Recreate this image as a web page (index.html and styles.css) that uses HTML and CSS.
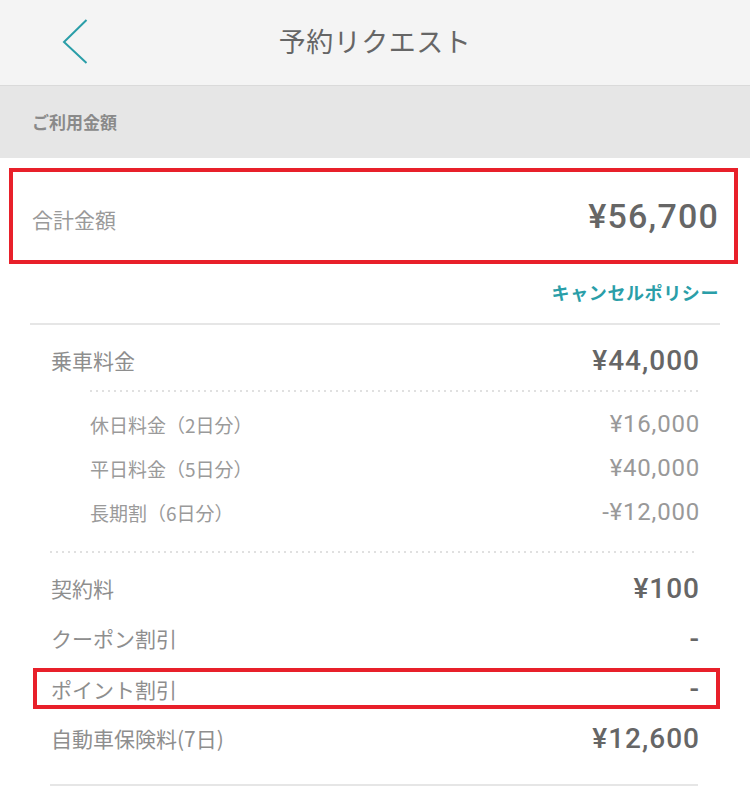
FILE: index.html
```html
<!DOCTYPE html>
<html lang="ja">
<head>
<meta charset="utf-8">
<title>予約リクエスト</title>
<link rel="stylesheet" href="styles.css">
</head>
<body>
<header class="header">
  <div class="header-left">
    <svg class="back" width="30" height="46" viewBox="0 0 30 46" aria-label="戻る">
      <polyline points="26.5,2 4,24 26.5,45" fill="none" stroke="#2a9ea8" stroke-width="2"/>
    </svg>
  </div>
  <h1 class="title">予約リクエスト</h1>
  <div class="header-right"></div>
</header>

<div class="section-head">ご利用金額</div>

<div class="total">
  <span class="total-label">合計金額</span>
  <span class="total-value">¥56,700</span>
</div>

<div class="policy"><a class="policy-link">キャンセルポリシー</a></div>

<div class="rule rule-wide"></div>

<div class="list">
  <div class="row row-first">
    <span class="label">乗車料金</span>
    <span class="value">¥44,000</span>
  </div>
  <div class="dots dots-sub"></div>
  <div class="sub">
    <div class="sub-row">
      <span class="sub-label">休日料金（2日分）</span>
      <span class="sub-value">¥16,000</span>
    </div>
    <div class="sub-row">
      <span class="sub-label">平日料金（5日分）</span>
      <span class="sub-value">¥40,000</span>
    </div>
    <div class="sub-row">
      <span class="sub-label">長期割（6日分）</span>
      <span class="sub-value">-¥12,000</span>
    </div>
  </div>
  <div class="dots"></div>
  <div class="main-rows">
    <div class="row">
      <span class="label">契約料</span>
      <span class="value">¥100</span>
    </div>
    <div class="row">
      <span class="label">クーポン割引</span>
      <span class="value">-</span>
    </div>
    <div class="row row-marked">
      <span class="label">ポイント割引</span>
      <span class="value">-</span>
    </div>
    <div class="row">
      <span class="label">自動車保険料(7日)</span>
      <span class="value">¥12,600</span>
    </div>
  </div>
  <div class="rule rule-end"></div>
</div>
</body>
</html>
```

FILE: styles.css
```css
* { box-sizing: border-box; }

body {
  margin: 0;
  width: 750px;
  background: #ffffff;
  font-family: "Noto Sans CJK JP", "Noto Sans", sans-serif;
  color: #888888;
}

.header {
  height: 86px;
  background: #f4f4f4;
  border-bottom: 1px solid #dadada;
  display: grid;
  grid-template-columns: 1fr auto 1fr;
  align-items: center;
}

.header-left {
  padding-left: 60px;
  display: flex;
  align-items: center;
  padding-bottom: 3px;
}

.back { display: block; }

.title {
  margin: 0;
  font-size: 27px;
  font-weight: 400;
  color: #666666;
  letter-spacing: 0.5px;
  padding-bottom: 4px;
}

.section-head {
  height: 72px;
  background: #e6e6e6;
  padding-left: 32px;
  display: flex;
  align-items: center;
  font-size: 17px;
  font-weight: 700;
  color: #8a8a8a;
  padding-bottom: 2px;
}

.total {
  margin: 10px 12px 0 9px;
  height: 96px;
  border: 4px solid #e8202a;
  display: flex;
  align-items: center;
  justify-content: space-between;
  padding: 0 16px 0 19px;
}

.total-label {
  font-size: 21px;
  color: #9a9a9a;
  padding-top: 6px;
}

.total-value {
  font-family: Roboto, "Liberation Sans", sans-serif;
  font-weight: 500;
  font-size: 34px;
  color: #666666;
  letter-spacing: 1.2px;
  margin-right: -1px;
}

.policy {
  height: 59px;
  display: flex;
  align-items: center;
  justify-content: flex-end;
  padding-right: 31px;
}

.policy-link {
  font-size: 18px;
  font-weight: 700;
  color: #2a9ea8;
  letter-spacing: 0.6px;
  padding-bottom: 4px;
}

.rule {
  height: 2px;
  background: #e6e6e6;
}

.rule-wide { margin: 0 30px; }

.list {
  padding: 0 52px 0 50px;
}

.row {
  height: 50px;
  display: flex;
  align-items: center;
  justify-content: space-between;
}

.row-first {
  height: 65px;
  padding-top: 5px;
}

.main-rows {
  padding-top: 10px;
}

.label {
  font-size: 21px;
  color: #8e8e8e;
  padding-left: 1px;
}

.value {
  font-family: Roboto, "Liberation Sans", sans-serif;
  font-weight: 500;
  font-size: 28px;
  color: #666666;
  letter-spacing: 1px;
  margin-right: -2px;
}

.dots {
  height: 2px;
  background-image: linear-gradient(to right, #e0e0e0 0 2px, transparent 2px 6px);
  background-size: 6px 2px;
  background-repeat: repeat-x;
}

.dots-sub { margin-left: 40px; }

.sub {
  padding: 10px 0 17px 40px;
}

.sub-row {
  height: 44px;
  display: flex;
  align-items: center;
  justify-content: space-between;
}

.sub-label {
  font-size: 19px;
  color: #9a9a9a;
}

.sub-value {
  font-family: Roboto, "Liberation Sans", sans-serif;
  font-weight: 400;
  font-size: 24px;
  color: #999999;
  letter-spacing: 0.8px;
  margin-right: -2px;
}

.row-marked {
  height: 41px;
  margin: 5px -22px 4px -17px;
  padding: 0 18px 0 13px;
  border: 4px solid #e8202a;
}

.rule-end { margin-top: 21px; }
```
